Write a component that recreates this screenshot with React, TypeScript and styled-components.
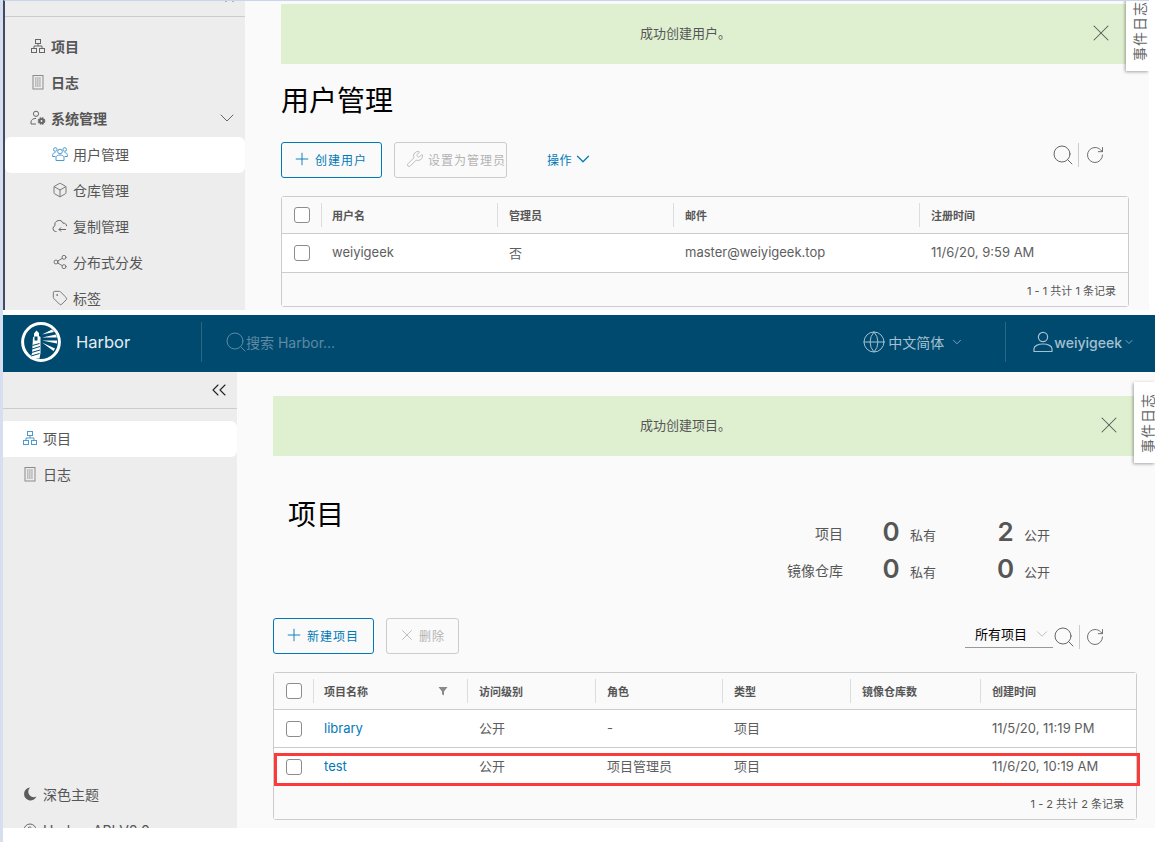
import React from "react";
import styled, { createGlobalStyle } from "styled-components";
import {
  Box, ChevronDown, ChevronsLeft, Globe, Plus, RotateCw, Search, Share2, Tag, Wrench, X,
} from "lucide-react";

const FONT = `Inter, "Noto Sans CJK SC", sans-serif`;
const PALE = "#d5dfef";

const Global = createGlobalStyle`
  html, body { margin: 0; padding: 0; background: #fff; }
  * { box-sizing: border-box; }
  body { font-family: ${FONT}; color: #565656; }
`;

const Page = styled.div`
  width: 1160px;
  height: 842px;
  overflow: hidden;
  background: #fff;
  border-left: 3px solid ${PALE};
`;

const UpperShot = styled.section`
  width: 1146px;
  height: 310px;
  display: flex;
  overflow: hidden;
  border-top: 1px solid #c9d5e8;
  border-left: 2px solid #3f4a63;
`;

const LowerShot = styled.section`
  width: 1152px;
  height: 513px;
  margin-top: 5px;
  display: flex;
  flex-direction: column;
  overflow: hidden;
`;

const TopBar = styled.header`
  height: 57px;
  flex: none;
  display: flex;
  align-items: center;
  padding-bottom: 3px;
  background: #004a70;
`;

const Brand = styled.div`
  width: 198px;
  display: flex;
  align-items: center;
  gap: 15px;
  padding-left: 18px;
  font-size: 16.5px;
  color: #e6edf1;
`;

const BarDivider = styled.span`
  width: 1px;
  height: 40px;
  background: #2b6685;
`;

const SearchBox = styled.div`
  display: flex;
  align-items: center;
  margin-left: 22px;
  font-size: 14px;
  color: #5f8aa2;
  svg { margin-right: -2px; }
`;

const BarMenu = styled.div<{ $gap: number; $start: number; $end: number }>`
  display: flex;
  align-items: center;
  gap: ${(p) => p.$gap}px;
  margin-left: ${(p) => p.$start}px;
  margin-right: ${(p) => p.$end}px;
  font-size: 14px;
  color: #a5c0cf;
`;

const BarText = styled.span<{ $strong?: boolean; $after?: number }>`
  font-weight: ${(p) => (p.$strong ? 500 : 400)};
  margin-right: ${(p) => p.$after ?? 0}px;
`;

const BarRight = styled.div`
  margin-left: auto;
  display: flex;
  align-items: center;
`;

const Body = styled.div`
  flex: 1;
  display: flex;
  min-height: 0;
`;

const Sidebar = styled.nav<{ $width: number }>`
  width: ${(p) => p.$width}px;
  flex: none;
  background: #ededed;
  overflow: hidden;
`;

const CollapseRow = styled.div<{ $height: number }>`
  height: ${(p) => p.$height}px;
  display: flex;
  align-items: flex-end;
  justify-content: flex-end;
  padding-right: 6px;
  border-bottom: 1px solid #ccc;
  margin-bottom: 12px;
  color: #222;
`;

const CollapseGlyph = styled.span<{ $drop: number }>`
  display: flex;
  margin-bottom: ${(p) => p.$drop}px;
`;

const NavItem = styled.div<{ $left: number; $active?: boolean; $strong?: boolean; $round?: string }>`
  height: 36px;
  display: flex;
  align-items: center;
  gap: 5px;
  padding-left: ${(p) => p.$left}px;
  padding-bottom: 2px;
  font-size: 14px;
  font-weight: ${(p) => (p.$strong ? 600 : 400)};
  color: #565656;
  background: ${(p) => (p.$active ? "#fff" : "transparent")};
  border-radius: ${(p) => (p.$active ? p.$round || "6px" : "0")};
  svg { color: ${(p) => (p.$active ? "#4a9bd0" : "#666")}; flex: none; }
`;

const NavChevron = styled.span`
  margin-left: auto;
  margin-right: 6px;
  display: flex;
`;

const SidebarFooter = styled.div`
  margin-top: 284px;
`;

const Main = styled.main<{ $pad: number; $right: number }>`
  position: relative;
  flex: 1;
  min-width: 0;
  overflow: hidden;
  background: #fafafa;
  padding: ${(p) => p.$pad}px ${(p) => p.$right}px 0 36px;
`;

const Alert = styled.div`
  height: 60px;
  display: flex;
  align-items: center;
  padding-bottom: 3px;
  background: #dff0d0;
  font-size: 13px;
  color: #565656;
  border-radius: 1px;
`;

const AlertText = styled.span`
  flex: 1;
  text-align: center;
  margin-right: -3px;
`;

const AlertClose = styled.span`
  display: flex;
  margin-right: 14px;
  color: #5a5a5a;
`;

const EventTab = styled.aside<{ $top: number; $width: number }>`
  position: absolute;
  right: 0;
  top: ${(p) => p.$top}px;
  width: ${(p) => p.$width}px;
  height: 81px;
  display: flex;
  align-items: center;
  padding-left: 6px;
  background: #fff;
  box-shadow: -1px 1px 3px rgba(0, 0, 0, 0.35);
  font-size: 14px;
  letter-spacing: 1px;
  color: #666;
`;

const EventLabel = styled.span`
  writing-mode: vertical-rl;
  text-orientation: sideways;
  transform: rotate(180deg);
  line-height: 15px;
  white-space: nowrap;
`;

const PageTitle = styled.h1<{ $indent?: number; $top?: number }>`
  margin: ${(p) => p.$top ?? 0}px 0 0 ${(p) => p.$indent ?? 0}px;
  font-size: 28px;
  line-height: 36px;
  font-weight: 400;
  color: #000;
`;

const TitleRow = styled.div`
  display: flex;
  align-items: flex-start;
  justify-content: space-between;
  margin-top: 40px;
`;

const Stats = styled.div`
  display: grid;
  grid-template-columns: 92px 32px 83px 31px 31px;
  grid-auto-rows: 37px;
  margin-top: 20px;
  margin-right: 85px;
  align-items: center;
  font-size: 13px;
`;

const StatLabel = styled.span`
  padding-right: 32px;
  padding-bottom: 4px;
  font-size: 14px;
  text-align: right;
  white-space: nowrap;
`;

const StatNum = styled.span`
  font-size: 26px;
  font-weight: 600;
  text-align: center;
  line-height: 30px;
  margin-top: -6px;
`;

const StatUnit = styled.span`
  padding-left: 3px;
  white-space: nowrap;
`;

const Toolbar = styled.div<{ $top: number }>`
  height: 36px;
  margin-top: ${(p) => p.$top}px;
  display: flex;
  align-items: flex-start;
`;

const Button = styled.button<{ $disabled?: boolean; $width: number; $gap: number; $left: number }>`
  width: ${(p) => p.$width}px;
  height: 36px;
  margin-right: 12px;
  display: flex;
  align-items: center;
  justify-content: flex-start;
  gap: ${(p) => p.$gap}px;
  border-radius: 3px;
  background: transparent;
  border: 1px solid ${(p) => (p.$disabled ? "#ccc" : "#0079b8")};
  color: ${(p) => (p.$disabled ? "#b3b3b3" : "#0079b8")};
  font-family: ${FONT};
  font-size: 12px;
  letter-spacing: 1px;
  white-space: nowrap;
  padding: 0 0 2px ${(p) => p.$left}px;
  svg { flex: none; }
`;

const ActionLink = styled.span`
  margin-left: 28px;
  height: 36px;
  display: flex;
  align-items: center;
  padding-bottom: 2px;
  font-size: 12px;
  letter-spacing: 0.5px;
  color: #0079b8;
`;

const Tools = styled.div<{ $top: number; $right: number }>`
  margin-left: auto;
  margin-top: ${(p) => p.$top}px;
  margin-right: ${(p) => p.$right}px;
  height: 24px;
  display: flex;
  align-items: center;
  color: #666;
`;

const ToolDivider = styled.span<{ $after: number }>`
  width: 1px;
  height: 24px;
  margin: 0 ${(p) => p.$after}px 0 3px;
  background: #ccc;
`;

const ProjectSelect = styled.div`
  width: 88px;
  height: 23px;
  margin-right: -1px;
  align-self: flex-start;
  display: flex;
  align-items: center;
  padding: 0 2px 5px 10px;
  border-bottom: 1px solid #999;
  font-size: 13px;
  color: #000;
  span { flex: 1; }
  svg { color: #aaa; }
`;

const Panel = styled.div<{ $height: number; $top: number }>`
  position: relative;
  height: ${(p) => p.$height}px;
  margin-top: ${(p) => p.$top}px;
  border: 1px solid #ccc;
  border-radius: 3px;
  display: flex;
  flex-direction: column;
`;

const Row = styled.div<{ $cols: string; $height: number }>`
  display: grid;
  grid-template-columns: ${(p) => p.$cols};
  height: ${(p) => p.$height}px;
  flex: none;
  align-items: center;
  background: #fff;
  border-bottom: 1px solid #ccc;
  font-size: 13px;
  color: #5e5e5e;
`;

const HeadRow = styled(Row)`
  background: #fafafa;
  font-size: 11px;
  font-weight: 600;
  color: #565656;
`;

const CheckCell = styled.div`
  display: flex;
  justify-content: center;
`;

const Check = styled.span`
  width: 16px;
  height: 16px;
  border: 1px solid #8c8c8c;
  border-radius: 3px;
  background: #fff;
`;

const HeadCell = styled.div`
  height: 24px;
  display: flex;
  align-items: center;
  justify-content: space-between;
  padding: 0 19px 0 10px;
  border-left: 1px solid #ddd;
  & + & { padding-left: 11px; }
  svg { color: #8a8a8a; }
`;

const Cell = styled.div<{ $first?: boolean; $link?: boolean }>`
  padding: 0 0 2px ${(p) => (p.$first ? 11 : 12)}px;
  white-space: nowrap;
  color: ${(p) => (p.$link ? "#0079b8" : "inherit")};
`;

const PanelFoot = styled.div`
  flex: 1;
  display: flex;
  align-items: center;
  justify-content: flex-end;
  padding-right: 12px;
  font-size: 11px;
  color: #565656;
  background: #fafafa;
`;

const Highlight = styled.div`
  position: absolute;
  left: 0;
  top: 80px;
  width: 866px;
  height: 33px;
  border: 3px solid #fb3a3a;
  pointer-events: none;
`;

const OrgIcon = () => (
  <svg width="16" height="16" viewBox="0 0 16 16" fill="none" stroke="currentColor" strokeWidth="1">
    <rect x="5.500" y="1.500" width="5" height="4" />
    <rect x="1.500" y="10.500" width="5" height="4" />
    <rect x="9.500" y="10.500" width="5" height="4" />
    <path d="M8 5.500V8M4 10.500V8h8v2.500" />
  </svg>
);

const LogIcon = () => (
  <svg width="16" height="16" viewBox="0 0 16 16" fill="none" stroke="#8a8a8a" strokeWidth="1">
    <rect x="3" y="1.500" width="10" height="13.500" />
    <path d="M5 4h6M5 6h6M5 8h6M5 10h6M5 12h6" strokeDasharray="1.500 0.600" />
  </svg>
);

const AdminIcon = () => (
  <svg width="16" height="16" viewBox="0 0 16 16" fill="none" stroke="currentColor" strokeWidth="1">
    <circle cx="6" cy="3.800" r="2.600" />
    <path d="M1 14v-2c0-2 2-3.600 5-3.600" />
    <path d="M1 14h5" />
    <circle cx="11.500" cy="11" r="2.800" fill="currentColor" strokeDasharray="1.600 0.600" strokeWidth="2" />
    <circle cx="11.500" cy="11" r="1" fill="#ededed" stroke="none" />
  </svg>
);

const TeamIcon = () => (
  <svg width="16" height="16" viewBox="0 0 16 16" fill="none" stroke="currentColor" strokeWidth="1">
    <circle cx="8" cy="5.500" r="2.300" />
    <circle cx="3.300" cy="3.500" r="1.800" />
    <circle cx="12.700" cy="3.500" r="1.800" />
    <path d="M4 14.500v-3c0-1.500 1.800-2.500 4-2.500s4 1 4 2.500v3z" />
    <path d="M3.500 10.500H.7V8.500c0-1 1.200-1.900 2.800-1.900M12.500 10.500h2.800V8.500c0-1-1.200-1.900-2.800-1.900" />
  </svg>
);

const CloudIcon = () => (
  <svg width="16" height="16" viewBox="0 0 16 16" fill="none" stroke="currentColor" strokeWidth="1">
    <path d="M4.500 13.500H3.600A3 3 0 0 1 3 7.700 4.200 4.200 0 0 1 11 5.200a3 3 0 0 1 3.600 3" />
    <path d="M7 11.500h7M9 9.500 7 11.500l2 2" />
  </svg>
);

const FilterIcon = () => (
  <svg width="10" height="10" viewBox="0 0 10 10" fill="currentColor">
    <path d="M0.500 1h9L6 5.400V9.500L4 8.300V5.400z" />
  </svg>
);

const MoonIcon = () => (
  <svg width="16" height="16" viewBox="-1 -1 16 16" fill="#5c5c5c">
    <path d="M7.200 0.600A6.400 6.400 0 1 0 13.400 9.400 5.400 5.400 0 0 1 7.200 0.600z" />
  </svg>
);

const HelpIcon = () => (
  <svg width="16" height="16" viewBox="-1 -1 16 16" fill="none" stroke="#666" strokeWidth="1">
    <circle cx="7" cy="7" r="6" />
    <path d="M5 5a2 2 0 1 1 2 3v1" />
  </svg>
);

const PersonIcon = () => (
  <svg width="20" height="22" viewBox="0 0 20 22" fill="none" stroke="currentColor" strokeWidth="1.200">
    <circle cx="10" cy="6" r="4.600" />
    <path d="M1 20.500v-2.700c0-2.800 4-4.800 9-4.800s9 2 9 4.800v2.700z" strokeLinejoin="round" />
  </svg>
);

const HarborLogo = () => (
  <svg width="40" height="40" viewBox="0 0 40 40">
    <circle cx="20" cy="20" r="18.400" fill="none" stroke="#fff" strokeWidth="3" />
    <path d="M15.500 8.500 18 11v3l1.500 1v16l-1 5.500h-9.500l2-5 1-16 1-1v-3z" fill="#fff" />
    <rect x="13.500" y="14.500" width="3" height="4" fill="#004a70" />
    <path d="M11.500 23.500l7-2M11 27l8-2.500M10.500 30.500l8.500-2.500M10 34l8.500-2.500" stroke="#004a70" strokeWidth="1" />
    <path d="M21 12.500 31 7.500l2 2.500zM21 15.500l14-3 .8 3zM21 18.500h15v3zM21 20.500l13 6-1.500 2.500z" fill="#fff" />
  </svg>
);

const USER_COLS = "39px 176px 176px 246px 1fr";
const PROJECT_COLS = "39px 154px 128px 127px 128px 130px 1fr";

const Picked = () => <CheckCell><Check /></CheckCell>;

const UserSidebarItems = () => (
  <>
    <NavItem $left={25} $strong><OrgIcon />项目</NavItem>
    <NavItem $left={25} $strong><LogIcon />日志</NavItem>
    <NavItem $left={25} $strong>
      <AdminIcon />系统管理
      <NavChevron><ChevronDown size={24} strokeWidth={1} /></NavChevron>
    </NavItem>
    <NavItem $left={47} $active><TeamIcon />用户管理</NavItem>
    <NavItem $left={47}><Box size={16} strokeWidth={1.300} />仓库管理</NavItem>
    <NavItem $left={47}><CloudIcon />复制管理</NavItem>
    <NavItem $left={47}><Share2 size={16} strokeWidth={1.300} />分布式分发</NavItem>
    <NavItem $left={47}><Tag size={16} strokeWidth={1.300} />标签</NavItem>
  </>
);

export default function App() {
  return (
    <>
      <Global />
      <Page>
        <UpperShot>
          <Sidebar $width={240}>
            <CollapseRow $height={16}>
              <CollapseGlyph $drop={8}><ChevronsLeft size={24} strokeWidth={1.100} /></CollapseGlyph>
            </CollapseRow>
            <UserSidebarItems />
          </Sidebar>
          <Main $pad={3} $right={20}>
            <Alert>
              <AlertText>成功创建用户。</AlertText>
              <AlertClose><X size={28} strokeWidth={0.9} /></AlertClose>
            </Alert>
            <PageTitle $top={19}>用户管理</PageTitle>
            <Toolbar $top={23}>
              <Button $width={101} $left={10} $gap={3}><Plus size={20} strokeWidth={1.100} />创建用户</Button>
              <Button $width={113} $left={11} $gap={4} $disabled><Wrench size={18} strokeWidth={1.100} />设置为管理员</Button>
              <ActionLink>操作<ChevronDown size={22} strokeWidth={1.300} /></ActionLink>
              <Tools $top={1} $right={24}>
                <Search size={24} strokeWidth={1} />
                <ToolDivider $after={6} />
                <RotateCw size={20} strokeWidth={1.100} />
              </Tools>
            </Toolbar>
            <Panel $height={111} $top={18}>
              <HeadRow $cols={USER_COLS} $height={37}>
                <Picked />
                <HeadCell>用户名</HeadCell>
                <HeadCell>管理员</HeadCell>
                <HeadCell>邮件</HeadCell>
                <HeadCell>注册时间</HeadCell>
              </HeadRow>
              <Row $cols={USER_COLS} $height={39}>
                <Picked />
                <Cell $first>weiyigeek</Cell>
                <Cell>否</Cell>
                <Cell>master@weiyigeek.top</Cell>
                <Cell>11/6/20, 9:59 AM</Cell>
              </Row>
              <PanelFoot>1 - 1 共计 1 条记录</PanelFoot>
            </Panel>
            <EventTab $top={-11} $width={23}><EventLabel>事件日志</EventLabel></EventTab>
          </Main>
        </UpperShot>

        <LowerShot>
          <TopBar>
            <Brand><HarborLogo />Harbor</Brand>
            <BarDivider />
            <SearchBox>
              <Search size={24} strokeWidth={1} />搜索 Harbor...
            </SearchBox>
            <BarRight>
              <BarMenu $gap={2} $start={0} $end={41}>
                <Globe size={24} strokeWidth={1} />
                <BarText $after={4}>中文简体</BarText>
                <ChevronDown size={14} strokeWidth={1.300} />
              </BarMenu>
              <BarDivider />
              <BarMenu $gap={1} $start={27} $end={20}>
                <PersonIcon />
                <BarText $strong>weiyigeek</BarText>
                <ChevronDown size={12} strokeWidth={1.500} />
              </BarMenu>
            </BarRight>
          </TopBar>
          <Body>
            <Sidebar $width={234}>
              <CollapseRow $height={37}>
                <CollapseGlyph $drop={6}><ChevronsLeft size={24} strokeWidth={1.100} /></CollapseGlyph>
              </CollapseRow>
              <NavItem $left={19} $active $round="0 6px 6px 0"><OrgIcon />项目</NavItem>
              <NavItem $left={19}><LogIcon />日志</NavItem>
              <SidebarFooter>
                <NavItem $left={19}><MoonIcon />深色主题</NavItem>
                <NavItem $left={19}><HelpIcon />Harbor API V2.0</NavItem>
              </SidebarFooter>
            </Sidebar>
            <Main $pad={24} $right={18}>
              <Alert>
                <AlertText>成功创建项目。</AlertText>
                <AlertClose><X size={28} strokeWidth={0.9} /></AlertClose>
              </Alert>
              <TitleRow>
                <PageTitle $indent={15} $top={1}>项目</PageTitle>
                <Stats>
                  <StatLabel>项目</StatLabel>
                  <StatNum>0</StatNum>
                  <StatUnit>私有</StatUnit>
                  <StatNum>2</StatNum>
                  <StatUnit>公开</StatUnit>
                  <StatLabel>镜像仓库</StatLabel>
                  <StatNum>0</StatNum>
                  <StatUnit>私有</StatUnit>
                  <StatNum>0</StatNum>
                  <StatUnit>公开</StatUnit>
                </Stats>
              </TitleRow>
              <Toolbar $top={28}>
                <Button $width={101} $left={10} $gap={3}><Plus size={20} strokeWidth={1.100} />新建项目</Button>
                <Button $width={73} $left={11} $gap={3} $disabled><X size={18} strokeWidth={1.100} />删除</Button>
                <Tools $top={7} $right={32}>
                  <ProjectSelect><span>所有项目</span><ChevronDown size={18} strokeWidth={1} /></ProjectSelect>
                  <Search size={24} strokeWidth={1} />
                  <ToolDivider $after={5} />
                  <RotateCw size={20} strokeWidth={1.100} />
                </Tools>
              </Toolbar>
              <Panel $height={148} $top={18}>
                <HeadRow $cols={PROJECT_COLS} $height={37}>
                  <Picked />
                  <HeadCell>项目名称<FilterIcon /></HeadCell>
                  <HeadCell>访问级别</HeadCell>
                  <HeadCell>角色</HeadCell>
                  <HeadCell>类型</HeadCell>
                  <HeadCell>镜像仓库数</HeadCell>
                  <HeadCell>创建时间</HeadCell>
                </HeadRow>
                <Row $cols={PROJECT_COLS} $height={38}>
                  <Picked />
                  <Cell $first $link>library</Cell>
                  <Cell>公开</Cell>
                  <Cell>-</Cell>
                  <Cell>项目</Cell>
                  <Cell />
                  <Cell>11/5/20, 11:19 PM</Cell>
                </Row>
                <Row $cols={PROJECT_COLS} $height={38}>
                  <Picked />
                  <Cell $first $link>test</Cell>
                  <Cell>公开</Cell>
                  <Cell>项目管理员</Cell>
                  <Cell>项目</Cell>
                  <Cell />
                  <Cell>11/6/20, 10:19 AM</Cell>
                </Row>
                <PanelFoot>1 - 2 共计 2 条记录</PanelFoot>
                <Highlight />
              </Panel>
              <EventTab $top={10} $width={21}><EventLabel>事件日志</EventLabel></EventTab>
            </Main>
          </Body>
        </LowerShot>
      </Page>
    </>
  );
}
